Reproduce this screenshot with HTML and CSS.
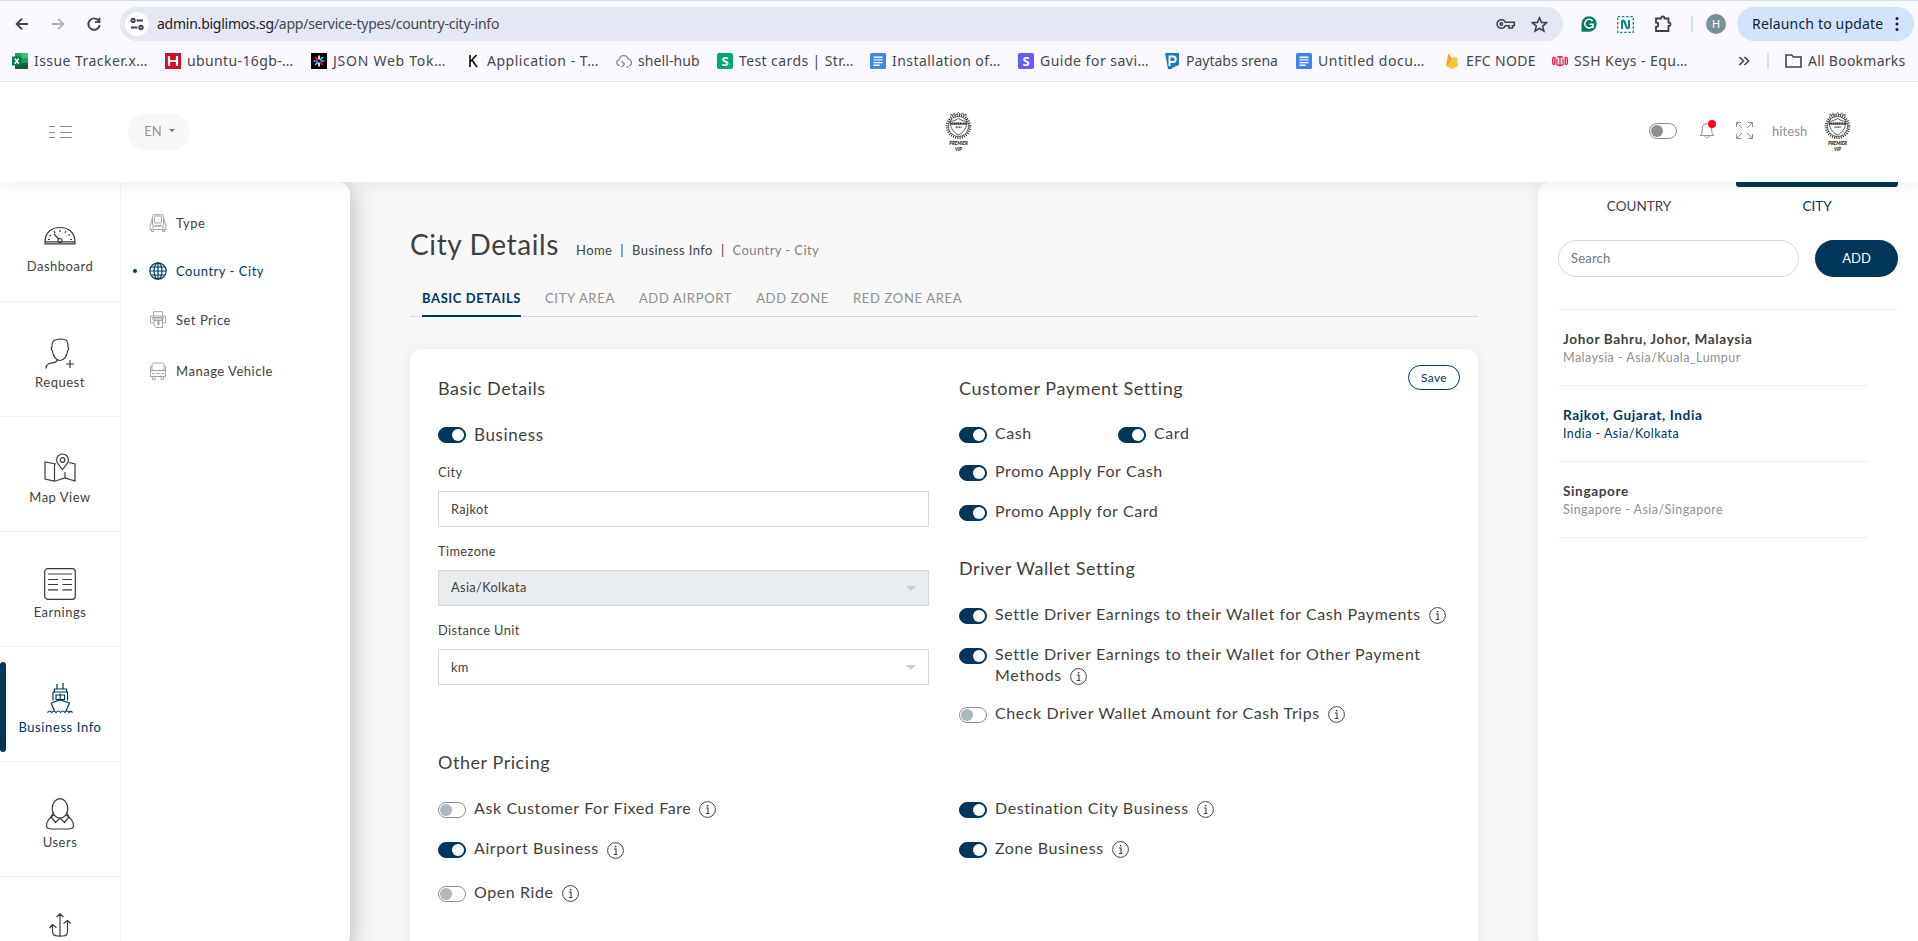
FILE: index.html
```html
<!DOCTYPE html>
<html lang="en">
<head>
<meta charset="utf-8">
<title>City Details</title>
<link rel="stylesheet" href="styles.css">
</head>
<body>
<svg class="defs" width="0" height="0">
  <symbol id="info" viewBox="0 0 17 17"><circle cx="8.5" cy="8.5" r="7.9" fill="none" stroke="currentColor"/><path d="M7 7h2v5.3M6.8 12.5h3.6" fill="none" stroke="currentColor" stroke-width="1.1"/><circle cx="8.6" cy="4.6" r=".9" fill="currentColor"/></symbol>
  <symbol id="crest" viewBox="0 0 28 28">
    <g fill="none" stroke="#2b2b2b">
      <ellipse cx="14" cy="15" rx="11.8" ry="11.600" stroke-width="2.800" stroke-dasharray="1 1.300"/>
      <ellipse cx="14" cy="15" rx="10.300" ry="10.300" stroke-width=".9" stroke-dasharray="2.500 .7"/>
      <path d="M6.500 4.500L6 2l2.500 1.300L9.500.8l2 2.200L14 .3 16.500 3l2-2.200 1 2.500L22 2l-.5 2.500" stroke-width=".7"/>
      <path d="M5.500 9.500c2.500.3 5-.7 8.500-2.700 3.500 2 6 3 8.500 2.700.3 6.500-2.500 11-8.500 14.500-6-3.500-8.800-8-8.500-14.500z" fill="#fff" stroke-width=".8"/>
      <path d="M5.500 12h17" stroke-width="2.200" stroke-dasharray="1.600 .3"/>
      <path d="M11 15.700h6.500" stroke-width="1.200" stroke-dasharray="1.200 .5"/>
    </g>
  </symbol>
  <symbol id="doc" viewBox="0 0 16 16"><rect width="16" height="16" rx="1.500" fill="#3f82f0"/><path d="M3.500 4.200h9M3.500 6.900h9M3.500 9.600h9M3.500 12.200h6" stroke="#fff" stroke-width="1.400"/></symbol>
</svg>

<header class="chrome">
  <div class="toolbar">
    <div class="nav-buttons">
      <svg width="16" height="16" viewBox="0 0 16 16"><path d="M14 8H3M8 2.700L2.700 8 8 13.300" class="ch"/></svg>
      <svg class="dim" width="16" height="16" viewBox="0 0 16 16"><path d="M2 8h11M8 2.700L13.300 8 8 13.300" class="ch"/></svg>
      <svg width="16" height="16" viewBox="0 0 16 16"><path d="M12.600 4.600A5.700 5.700 0 1 0 13.700 9M13.400 1.800v4.300H9" class="ch"/></svg>
    </div>
    <div class="address">
      <span class="site-info"><svg width="14" height="14" viewBox="0 0 14 14"><g class="ch"><circle cx="3" cy="3.500" r="1.700"/><path d="M6.500 3.500H13M1 10.500h6.500"/><circle cx="11" cy="10.500" r="1.700"/></g></svg></span>
      <span class="url"><b>admin.biglimos.sg</b>/app/service-types/country-city-info</span>
      <svg class="key" width="20" height="14" viewBox="0 0 20 14"><g class="ch thin"><path d="M9.300 5.300A4.300 4.300 0 1 0 9.300 8.700H13V11h3.500V8.700H18.300V5.300z"/><circle cx="5.300" cy="7" r="1.200"/></g></svg>
      <svg width="17" height="17" viewBox="0 0 17 17"><path class="ch thin" d="M8.500 1.800l2 4.600 5 .4-3.800 3.300 1.200 4.900-4.400-2.600L4.100 15l1.200-4.900L1.500 6.800l5-.4z"/></svg>
    </div>
    <div class="extensions">
      <svg width="16" height="16" viewBox="0 0 16 16"><path d="M8 .3a7.700 7.700 0 1 1 0 15.400H.5V8A7.600 7.600 0 0 1 8 .3z" fill="#087a63"/><path d="M11.500 5A4.300 4.300 0 1 0 12 9.500M8.500 8.300h3.600V12" stroke="#fff" stroke-width="1.500" fill="none"/></svg>
      <svg width="17" height="17" viewBox="0 0 17 17"><rect x=".7" y=".7" width="15.600" height="15.600" fill="none" stroke="#12808c" stroke-width="1.300" stroke-dasharray="2.500 1.700"/><path d="M5 13V5.500c0-1.500 2-1.500 2.300 0l2.500 6c.3 1.200 2.200 1 2.200-.5V4" stroke="#12808c" stroke-width="2" fill="none"/></svg>
      <svg width="18" height="18" viewBox="0 0 18 18"><path d="M2 3.500h5C7 .8 10.500.8 10.500 3.500H14.500V7.500c2.700 0 2.700 3.500 0 3.500v5H2v-4c3 0 3-4.500 0-4.500z" fill="none" stroke="#3c4043" stroke-width="1.800"/></svg>
      <i class="sep"></i>
      <span class="avatar">H</span>
    </div>
    <div class="relaunch"><span>Relaunch to update</span><svg width="4" height="16" viewBox="0 0 4 16"><g fill="#0b1f3c"><circle cx="2" cy="2.500" r="1.500"/><circle cx="2" cy="8" r="1.500"/><circle cx="2" cy="13.500" r="1.500"/></g></svg></div>
  </div>
  <nav class="bookmarks">
    <span class="bm w1"><svg viewBox="0 0 16 16"><path d="M3 0h13v16H3z" fill="#1c9e5c"/><path d="M9 0h7v5H9z" fill="#33c481"/><path d="M3 10h13v6H3z" fill="#185c37"/><path d="M0 3.500h9.500v9H0z" fill="#0b7a43"/><path d="M2.800 5.500l4 5.200M6.800 5.500l-4 5.200" stroke="#fff" stroke-width="1.400"/></svg>Issue Tracker.x…</span>
    <span class="bm w2"><svg viewBox="0 0 16 16"><path d="M0 0h16v16H0z" fill="#d50c2d"/><path d="M4 3v10M12 3v10M4 8h8" stroke="#fff" stroke-width="2.200"/></svg>ubuntu-16gb-…</span>
    <span class="bm w3"><svg viewBox="0 0 16 16"><path d="M0 0h16v16H0z" fill="#000"/><g stroke-width="1.700"><path d="M8 2.500v4" stroke="#fff"/><path d="M8 9.500v4" stroke="#fff"/><path d="M2.500 8h4" stroke="#d63aff"/><path d="M9.500 8h4" stroke="#00b9f1"/><path d="M4.200 4.200L7 7" stroke="#fb015b"/><path d="M9 9l2.800 2.800" stroke="#fb015b"/><path d="M11.800 4.200L9 7" stroke="#00f2e6"/><path d="M7 9l-2.800 2.800" stroke="#00f2e6"/></g></svg>JSON Web Tok…</span>
    <span class="bm w4"><svg viewBox="0 0 16 16"><path d="M0 0h16v16H0z" fill="#fff"/><path d="M5 2v12M11.500 2L5.500 8.500M7 7l5 7" stroke="#111" stroke-width="1.700" fill="none"/></svg>Application - T…</span>
    <span class="bm w5"><svg viewBox="0 0 16 16"><path d="M4 12.500C0 12.500-.3 7.500 3 7 3.500 1.500 11 1 12 6c4.500.3 4.500 6.500 1 6.500" fill="none" stroke="#7b84a3" stroke-width="1.200"/><path d="M5.500 8l3 3-3 3M10 14h3" fill="none" stroke="#7b84a3" stroke-width="1.200"/></svg>shell-hub</span>
    <span class="bm w6"><i class="fav green">S</i>Test cards | Str…</span>
    <span class="bm w7"><svg><use href="#doc"/></svg>Installation of…</span>
    <span class="bm w8"><i class="fav purple">S</i>Guide for savi…</span>
    <span class="bm w9"><svg viewBox="0 0 16 16"><path d="M1 0h14v12l-7 3v1H4z" fill="#1d7ac6"/><path d="M5.500 13V3.500h3.500a2.700 2.700 0 0 1 0 5.500H6" stroke="#fff" stroke-width="1.900" fill="none"/></svg>Paytabs srena</span>
    <span class="bm w10"><svg><use href="#doc"/></svg>Untitled docu…</span>
    <span class="bm w11"><svg viewBox="0 0 16 16"><path d="M2 13L4.500.5 8 6l2-3 1.500 2.300L13.200 4 14 13l-6 3z" fill="#ffc43d"/><path d="M2 13L4.500.5 8 6z" fill="#ff9a1f"/></svg>EFC NODE</span>
    <span class="bm w12"><svg viewBox="0 0 16 16"><path d="M.7 5v6M2.800 4v7.500M5 5.500v6.500M8 3.500v9M11 5.500v6.500M13.200 4v7.500M15.300 5v6M.7 5l2.100-1M5 4.200L8 3.500l3 .7M.7 11l2.100.7M5 12l3 .7 3-.7M13.200 4l2.100 1M13.200 11.700l2.100-.7" stroke="#ed1c3c" stroke-width="1.300" fill="none"/></svg>SSH Keys - Equ…</span>
    <span class="bm-end"><svg width="12" height="12" viewBox="0 0 12 12"><path class="ch thin" d="M1.500 2l4 4-4 4M6.500 2l4 4-4 4"/></svg><i class="sep"></i><svg width="17" height="14" viewBox="0 0 17 14"><path class="ch thin" d="M1 1h5.500l2 2H16v10H1z"/></svg><span>All Bookmarks</span></span>
  </nav>
</header>

<div class="topbar">
  <svg class="menu-icon" width="23" height="13" viewBox="0 0 23 13"><path d="M0 .5h6M0 6.500h6M0 11.500h6M11 .5h12M11 6.500h12M11 11.500h12" stroke="#8f8f8f"/></svg>
  <button class="lang">EN <i></i></button>
  <div class="brand"><svg width="27" height="27"><use href="#crest"/></svg><svg class="brand-name" width="27" height="13"><text x="13.500" y="5.500">PREMIER</text><text x="13.500" y="11.500">VIP</text></svg></div>
  <div class="tools">
    <i class="switch off grey"></i>
    <span class="bell"><svg width="16" height="17" viewBox="0 0 16 17"><path d="M1 13.500c2-1.500 2.300-3 2.300-6.500C3.300 3.500 5 1.700 8 1.700S12.700 3.500 12.700 7c0 3.500.3 5 2.300 6.500zM6 14c.3 2.400 3.700 2.400 4 0" fill="none" stroke="#8f8f8f"/></svg><b></b></span>
    <svg class="expand" width="17" height="17" viewBox="0 0 17 17"><path d="M.5 5V.5H5M.5.5l5.500 5.500M12 .5h4.500V5M16.500.5L11 6M.5 12v4.500H5M.5 16.500L6 11M12 16.500h4.500V12M16.500 16.500L11 11" fill="none" stroke="#8f8f8f"/></svg>
    <span class="user">hitesh</span>
  </div>
  <div class="brand account"><svg width="27" height="27"><use href="#crest"/></svg><svg class="brand-name" width="27" height="13"><text x="13.500" y="5.500">PREMIER</text><text x="13.500" y="11.500">VIP</text></svg></div>
</div>

<div class="app">
  <nav class="side">
    <a><svg viewBox="0 0 32 32"><path d="M1 19.500C1 9 8 4.500 16 4.500s15 4.500 15 15v1.300H1zM1 18.800h30"/><path d="M10 11l5 5.500"/><circle cx="16" cy="17.500" r="2"/><path d="M16 7v2M10 8l1 2M22 8l-1 2M26 11.500l-1.500 1M5.500 12l1.500 1M4 16.500h2M28 16.500h-2"/></svg>Dashboard</a>
    <a><svg viewBox="0 0 32 32"><path d="M16 1c4 0 6 .5 7 2 1 1.500.8 4 1 6 1 0 .8 3-.3 3.500C23 18 20 22.500 16 22.500S9 18 8.300 12.500C7 12 7 9 8 9c-.3-3 0-4.500 1.500-6C11 1.500 13 1.500 16 1zM13 22c.5 5-11 0-11 8.500M26 22v8M22 26h8"/></svg>Request</a>
    <a><svg viewBox="0 0 32 32"><path d="M12 11L9.500 10.500 1 9v17l9.500 2.200L21 25l10 3V11l-6-1.500M10.500 11v17M21 19v6"/><path d="M18.500 16.500C15 12 12.500 10 12.500 7a6 6 0 0 1 12 0c0 3-2.500 5-6 9.500z"/><circle cx="18.500" cy="7" r="2.300"/></svg>Map View</a>
    <a><svg viewBox="0 0 32 32"><rect x=".7" y=".7" width="30.600" height="30.600" rx="3"/><path d="M4 6h24M4 11.500h10M18.500 11.500H28M4 16.500h10M18.500 16.500H28M4 21.800h10M18.500 21.800H28"/></svg>Earnings</a>
    <a class="active"><svg viewBox="0 0 32 32"><path d="M13 1v5M19 0v6M10.500 6h12v3h-12zM9 9h14.500v8.500M9 9v8.500M12 12h8.500v4.500H12zM16.200 10.500v6M7 20l9.300-3 9.200 3-4 9M7 20l4 9M3.500 29.500c2-2 2.500-2 4 0 2-2 3-2 4.500 0 2-2 3-2 4.500 0 1.500-2 3-2 4.500 0 1.500-2 3-2 4 0 1-1.500 2-1.500 3.500 0"/></svg>Business Info</a>
    <a><svg viewBox="0 0 32 32"><ellipse cx="16" cy="10.500" rx="7.800" ry="9.800"/><path d="M10 17c-4 2-8 7-7.500 11 .3 2.500 2 3 5 3h17c3 0 4.700-.5 5-3 .5-4-3.500-9-7.500-11M9.500 14.500L7 19l4.500 5.500L16 20l4.500 4.500L25 19l-2.500-4.500"/></svg>Users</a>
    <a><svg viewBox="0 0 32 32"><path d="M16 24V1M12.500 4L16 .8 19.500 4M8.500 12v6c0 3.500 2 5 5 5h6c3.500 0 4-2 4-5V8M5.500 15l3-3.500 4 3M19.500 10.500l4-3 3.500 3"/></svg></a>
  </nav>
  <nav class="submenu">
    <a><svg viewBox="0 0 18 18"><rect x="3.500" y=".7" width="11" height="11.300" rx="1.500"/><rect x="5.500" y="2" width="7" height="7" rx="1"/><path d="M3.500 4L1 12v3.500h16V12L14.500 4M6 12h6M2.500 15.500v2h2v-2M13.500 15.500v2h2v-2M3 13.500h2M13 13.500h2"/></svg>Type</a>
    <a class="active"><svg viewBox="0 0 18 18"><circle cx="9" cy="9" r="8.200"/><ellipse cx="9" cy="9" rx="4" ry="8.200"/><path d="M9 .8v16.400M.8 9h16.400M2.200 5h13.600M2.200 13h13.600"/></svg>Country - City</a>
    <a><svg viewBox="0 0 18 18"><path d="M4.500 5V.7h9V5M4 12H1.500V5h15v7H14M3 6.500h12M3 8h12M5 7v7l2 2.500h6.500V7M5 9.500h8.500"/><path d="M9.500 9.500v5M8 11h3M8 13h3"/></svg>Set Price</a>
    <a><svg viewBox="0 0 18 18"><rect x="3" y="1" width="12" height="7.500" rx="1.500"/><path d="M1.500 4v5L3 8.500M16.500 4v5L15 8.500M3 8.500h12l1.500 1.500v4.500h-15V10zM3 11.500h2M7 11.500h4M13 11.500h2M3.500 14.500v3h2.500v-3M12 14.500v3h2.500v-3"/></svg>Manage Vehicle</a>
  </nav>

  <main>
    <div class="heading"><h1>City Details</h1><span>Home</span><i>|</i><span>Business Info</span><i>|</i><span class="cur">Country - City</span></div>
    <div class="tabs"><a class="active">BASIC DETAILS</a><a>CITY AREA</a><a>ADD AIRPORT</a><a>ADD ZONE</a><a>RED ZONE AREA</a></div>
    <section class="card">
      <button class="save">Save</button>
      <div class="cols">
        <div>
          <h2>Basic Details</h2>
          <div class="biz"><i class="switch on"></i>Business</div>
          <label>City</label><div class="field">Rajkot</div>
          <label>Timezone</label><div class="field select disabled">Asia/Kolkata</div>
          <label>Distance Unit</label><div class="field select">km</div>
        </div>
        <div>
          <h2>Customer Payment Setting</h2>
          <div class="pair"><div class="row"><i class="switch on"></i><span>Cash</span></div><div class="row"><i class="switch on"></i><span>Card</span></div></div>
          <div class="row g17"><i class="switch on"></i><span>Promo Apply For Cash</span></div>
          <div class="row g19"><i class="switch on"></i><span>Promo Apply for Card</span></div>
          <h2 class="second">Driver Wallet Setting</h2>
          <div class="row"><i class="switch on"></i><span>Settle Driver Earnings to their Wallet for Cash Payments<svg class="info"><use href="#info"/></svg></span></div>
          <div class="row g19"><i class="switch on"></i><span>Settle Driver Earnings to their Wallet for Other Payment<br>Methods<svg class="info"><use href="#info"/></svg></span></div>
          <div class="row g17"><i class="switch off"></i><span>Check Driver Wallet Amount for Cash Trips<svg class="info"><use href="#info"/></svg></span></div>
        </div>
      </div>
      <h2 class="other">Other Pricing</h2>
      <div class="cols">
        <div>
          <div class="row"><i class="switch off"></i><span>Ask Customer For Fixed Fare<svg class="info"><use href="#info"/></svg></span></div>
          <div class="row g19"><i class="switch on"></i><span>Airport Business<svg class="info low"><use href="#info"/></svg></span></div>
          <div class="row g23"><i class="switch off"></i><span>Open Ride<svg class="info"><use href="#info"/></svg></span></div>
        </div>
        <div>
          <div class="row"><i class="switch on"></i><span>Destination City Business<svg class="info"><use href="#info"/></svg></span></div>
          <div class="row g19"><i class="switch on"></i><span>Zone Business<svg class="info"><use href="#info"/></svg></span></div>
        </div>
      </div>
    </section>
  </main>

  <aside>
    <div class="atabs"><a>COUNTRY</a><a class="active">CITY</a></div>
    <div class="search"><div class="box">Search</div><button>ADD</button></div>
    <ul>
      <li><b>Johor Bahru, Johor, Malaysia</b><span>Malaysia - Asia/Kuala_Lumpur</span></li>
      <li class="active"><b>Rajkot, Gujarat, India</b><span>India - Asia/Kolkata</span></li>
      <li><b>Singapore</b><span>Singapore - Asia/Singapore</span></li>
    </ul>
  </aside>
</div>
</body>
</html>
```
FILE: styles.css
```css
* { box-sizing: border-box; }
body { margin: 0; height: 941px; overflow: hidden; background: #f8f8f8; color: #3f3f3f; font: 13px/20px Lato, sans-serif; display: flex; flex-direction: column; }
button { font: inherit; letter-spacing: inherit; }
i { font-style: normal; }
h1, h2, ul { margin: 0; padding: 0; font-weight: 400; }
.defs { position: absolute; }

/* browser bar */
.chrome { flex: none; height: 82px; background: #faf9ff; border-top: 1px solid #d3e2fb; border-bottom: 1px solid #dfe1ea; font: 14px/20px "Noto Sans", sans-serif; color: #44474b; position: relative; z-index: 5; }
.ch { fill: none; stroke: #3c4350; stroke-width: 1.9; }
.ch.thin { stroke-width: 1.6; }
.toolbar { display: flex; align-items: center; height: 34px; margin-top: 6px; padding: 0 4px 0 14px; }
.nav-buttons { display: flex; gap: 20px; width: 106px; }
.nav-buttons .dim { opacity: .38; }
.address { display: flex; align-items: center; width: 1443px; height: 34px; border-radius: 17px; background: #e5e8f3; padding: 0 15px 0 5px; }
.site-info { width: 24px; height: 24px; border-radius: 50%; background: #fff; display: grid; place-items: center; margin-right: 8px; }
.url { flex: 1; letter-spacing: -.24px; }
.url b { font-weight: 400; color: #1f2023; }
.key { margin-right: 15px; }
.extensions { display: flex; align-items: center; gap: 20px; margin-left: 18px; }
.sep { width: 2px; height: 16px; background: #d3e2fb; }
.extensions .sep { margin-left: -1px; }
.avatar { width: 20px; height: 20px; margin-left: -7px; border-radius: 50%; background: #78909c; color: #fff; font-size: 11px; text-align: center; }
.relaunch { display: flex; align-items: center; justify-content: space-between; width: 177px; height: 34px; margin-left: auto; padding: 0 15px; border-radius: 17px; background: #d3e3fd; color: #0b1f3c; white-space: nowrap; letter-spacing: .17px; }
.bookmarks { display: flex; align-items: center; height: 40px; padding-left: 12px; }
.bm { display: flex; align-items: center; gap: 6px; white-space: nowrap; }
.bm svg, .bm .fav { width: 16px; height: 16px; flex: none; }
.fav { border-radius: 2px; color: #fff; font: 700 13px/16px "Noto Sans", sans-serif; text-align: center; letter-spacing: 0; }
.green { background: #06a773; }
.purple { background: #635bff; }
.w1 { width: 153px; letter-spacing: .45px; }
.w2 { width: 146px; letter-spacing: .38px; }
.w3 { width: 154px; letter-spacing: .74px; }
.w4 { width: 151px; letter-spacing: .52px; }
.w5 { width: 101px; letter-spacing: .1px; }
.w6 { width: 153px; letter-spacing: .4px; }
.w7 { width: 148px; letter-spacing: .45px; }
.w8 { width: 146px; letter-spacing: .5px; }
.w9 { width: 132px; }
.w10 { width: 148px; letter-spacing: .5px; }
.w11 { width: 108px; letter-spacing: .35px; }
.w12 { width: 174px; letter-spacing: .42px; }
.bm-end { display: flex; align-items: center; margin-left: 12px; white-space: nowrap; letter-spacing: .25px; }
.bm-end .sep { margin: 0 16px 0 17px; }
.bm-end > span { margin-left: 6px; }

/* application header */
.topbar { flex: none; height: 100px; background: #fff; box-shadow: 0 4px 16px rgba(0,0,0,.06); position: relative; z-index: 3; display: flex; align-items: center; color: #8f8f8f; }
.menu-icon { margin-left: 49px; }
.lang { display: flex; align-items: center; justify-content: center; gap: 7px; width: 61px; height: 38px; margin-left: 56px; padding: 0 0 3px 2px; border: 0; border-radius: 19px; background: #f8f8f8; color: #959595; }
.lang i { border: 3px solid transparent; border-top-color: #777; border-bottom: 0; }
.brand { display: flex; flex-direction: column; width: 27px; margin-left: 756px; }
.brand-name { font: italic 900 4.6px Lato, sans-serif; text-anchor: middle; fill: #222; }
.tools { display: flex; align-items: center; margin-left: 677px; padding-bottom: 3px; }
.account { margin-left: 16px; }
.bell { position: relative; display: flex; margin-left: 22px; }
.bell b { position: absolute; right: -1px; top: -2px; width: 8px; height: 8px; border-radius: 50%; background: #ff0320; }
.expand { margin: 0 19px 0 21px; }
.user { width: 36px; letter-spacing: .1px; }

/* switches */
.switch { position: relative; flex: none; width: 28px; height: 16px; border-radius: 8px; border: 1px solid #8f8f8f; }
.switch::after { content: ""; position: absolute; left: 1px; top: 1px; width: 12px; height: 12px; border-radius: 50%; background: #adb5bd; }
.switch.grey::after { background: #8f8f8f; }
.switch.on { background: #00365a; border-color: #00365a; }
.switch.on::after { left: 13px; background: #fff; }

/* navigation */
.app { display: flex; height: 765px; flex: none; }
.side { width: 121px; background: #fff; border-right: 1px solid #f3f3f3; padding-top: 5px; position: relative; z-index: 2; letter-spacing: .5px; }
.side a { position: relative; display: flex; flex-direction: column; align-items: center; height: 115px; padding-top: 36px; border-bottom: 1px solid #f3f3f3; }
.side a:first-child svg { margin-bottom: 1px; }
.side svg { width: 32px; height: 32px; fill: none; stroke: #3a3a3a; stroke-width: 1.2; margin-bottom: 2px; flex: none; }
.side .active { color: #00365a; letter-spacing: .6px; }
.side .active svg { stroke: #00365a; }
.side .active::before { content: ""; position: absolute; left: 0; top: 15px; width: 6px; height: 90px; border-radius: 3px; background: #00365a; }
.submenu { width: 229px; background: #fff; border-radius: 0 12px 12px 0; box-shadow: 5px 5px 22px rgba(0,0,0,.22); padding: 31px 0 0 28px; letter-spacing: .52px; }
.submenu a { position: relative; display: flex; align-items: center; gap: 9px; height: 20px; margin-bottom: 29px; }
.submenu a:nth-child(1) { margin-bottom: 28px; }
.submenu a:nth-child(3) { margin-bottom: 31px; }
.submenu svg { width: 18px; height: 18px; fill: none; stroke: #9b9b9b; stroke-width: .9; }
.submenu .active { color: #00365a; }
.submenu .active svg { stroke: #00365a; stroke-width: 1.2; }
.submenu .active::before { content: ""; position: absolute; left: -16px; top: 8px; width: 4px; height: 4px; border-radius: 50%; background: #00365a; }

/* content */
main { width: 1068px; margin: 0 60px; }
.heading { display: flex; align-items: baseline; height: 80px; padding-top: 44px; letter-spacing: .42px; }
.heading h1 { font-size: 28px; line-height: 36px; width: 166px; letter-spacing: .62px; }
.heading i { margin: 0 8px; }
.heading .cur { color: #7c7f84; }
.tabs { display: flex; height: 55px; padding: 26px 0 0 12px; border-bottom: 1px solid #d7d7d7; color: #8f8f8f; letter-spacing: .68px; white-space: nowrap; }
.tabs a { height: 29px; margin-right: 24px; }
.tabs .active { color: #00365a; border-bottom: 2px solid #00365a; font-weight: 700; letter-spacing: .6px; }
.card { position: relative; height: 640px; margin-top: 32px; padding: 27px 28px; background: #fff; border-radius: 12px; box-shadow: 0 1px 15px rgba(0,0,0,.06); }
.save { position: absolute; right: 18px; top: 16px; width: 52px; height: 25px; border: 1px solid #00365a; border-radius: 13px; background: #fff; color: #00365a; font-size: 12px; line-height: 21px; letter-spacing: .4px; padding: 0; }
.cols { display: grid; grid-template-columns: 491px 491px; gap: 30px; }
h2 { font-size: 18px; line-height: 24px; margin-bottom: 22px; letter-spacing: .55px; }
.second { margin-top: 35px; margin-bottom: 23px; }
.other { margin: 27px 0 23px; }
.biz { display: flex; align-items: center; gap: 8px; height: 24px; margin-top: 23px; font-size: 17px; letter-spacing: .6px; }
label { display: block; margin: 14px 0 9px; font-size: 12.8px; letter-spacing: .42px; }
.biz + label { margin-top: 15px; }
.field { position: relative; height: 36px; padding: 7px 12px; border: 1px solid #d7d7d7; font-size: 12.8px; letter-spacing: .35px; }
.select::after { content: ""; position: absolute; right: 12px; top: 15px; border: 5px solid transparent; border-top-color: #ccc; border-bottom: 0; }
.disabled { background: #e9ecef; padding-top: 6px; }
.row { display: flex; gap: 8px; font-size: 16px; line-height: 21px; letter-spacing: .6px; white-space: nowrap; }
.row .switch { margin-top: 5px; }
.g17 { margin-top: 17px; } .g19 { margin-top: 19px; } .g23 { margin-top: 23px; }
.pair { display: grid; grid-template-columns: 159px 159px; }
.info { width: 17px; height: 17px; margin: -3px 0 -3px 8px; vertical-align: -1px; }
.info.low { vertical-align: -2px; }

/* city list */
aside { flex: 1; background: #fff; border-radius: 12px 0 0 12px; box-shadow: 0 1px 15px rgba(0,0,0,.08); padding: 0 20px; }
.atabs { display: grid; grid-template-columns: 162px 162px; gap: 16px; height: 58px; text-align: center; font-size: 13.5px; }
.atabs a { padding-top: 14px; position: relative; }
.atabs .active { color: #00365a; }
.atabs .active::before { content: ""; position: absolute; left: 0; top: 0; width: 162px; height: 5px; border-radius: 0 0 3px 3px; background: #00365a; }
.search { display: flex; justify-content: space-between; padding-bottom: 32px; border-bottom: 1px solid #f0f0f0; }
.box { width: 241px; height: 37px; border: 1px solid #d7d7d7; border-radius: 19px; padding: 7px 12px; color: #6c757d; letter-spacing: .2px; }
.search button { width: 83px; border: 0; border-radius: 19px; background: #00365a; color: #fff; padding-bottom: 3px; }
ul { list-style: none; width: 310px; }
li { height: 76px; padding: 19px 5px 0; border-bottom: 1px solid #f0f0f0; letter-spacing: .62px; white-space: nowrap; }
li b { display: block; font-size: 13.6px; height: 20px; }
li span { display: block; color: #8f8f8f; font-size: 12.5px; line-height: 18px; letter-spacing: .46px; }
li.active, li.active span { color: #00365a; }
```
